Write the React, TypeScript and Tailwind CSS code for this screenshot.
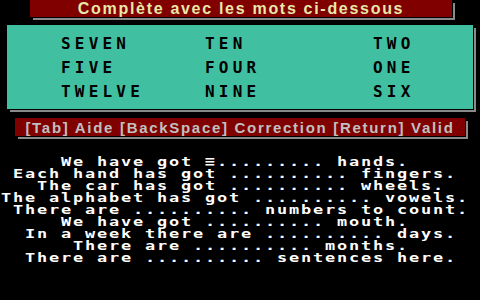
import React from 'react';

const words: string[][] = [
  ['SEVEN', 'TEN', 'TWO'],
  ['FIVE', 'FOUR', 'ONE'],
  ['TWELVE', 'NINE', 'SIX'],
];

// lines in a 40-column text screen, leading spaces included
const sentences: string[] = [
  '     We have got \u2261......... hands.',
  ' Each hand has got .......... fingers.',
  '   The car has got .......... wheels.',
  'The alphabet has got .......... vowels.',
  ' There are .......... numbers to count.',
  '     We have got .......... mouth.',
  '  In a week there are .......... days.',
  '      There are .......... months.',
  '  There are .......... sentences here.',
];

const barShadow = 'shadow-[1px_1px_0_0_#000,3px_3px_0_0_#8a8a8a]';

const TextLine: React.FC<{ text: string }> = ({ text }) => (
  <div className="flex h-[12px] leading-[12px]">
    {text.split('').map((ch, i) => (
      <span key={i} className="inline-block w-[12px] shrink-0 text-center whitespace-pre scale-x-[1.3]">
        {ch}
      </span>
    ))}
  </div>
);

export default function App() {
  return (
    <div className="w-[480px] h-[300px] overflow-hidden bg-black flex flex-col">
      <div
        className={`ml-[30px] w-[422px] h-[17px] bg-[#800000] ${barShadow} flex items-center justify-center text-[#e8e8a8] font-['Liberation_Sans',sans-serif] text-[16px] font-bold tracking-[1.7px] leading-none`}
      >
        Complète avec les mots ci-dessous
      </div>

      <div
        className={`mt-[8px] ml-[7px] w-[466px] h-[84px] bg-[#40c0a0] ${barShadow} pt-[7px] pl-[54px]`}
      >
        <div className="grid grid-cols-[144px_168px_auto] font-['DejaVu_Sans_Mono',monospace] font-bold text-[16px] leading-[24px] tracking-[4.2px] text-black">
          {words.map((row) =>
            row.map((w) => <div key={w}>{w}</div>)
          )}
        </div>
      </div>

      <div
        className={`mt-[9px] ml-[15px] w-[450px] h-[18px] bg-[#800000] ${barShadow} flex items-center justify-center text-[#c0c0c0] font-['Liberation_Sans',sans-serif] text-[15px] font-bold tracking-[1.7px] leading-none`}
      >
        [Tab] Aide [BackSpace] Correction [Return] Valid
      </div>

      <div className="mt-[20px] text-white font-['DejaVu_Sans_Mono',monospace] font-bold text-[13px]">
        {sentences.map((s, i) => (
          <TextLine key={i} text={s} />
        ))}
      </div>
    </div>
  );
}
